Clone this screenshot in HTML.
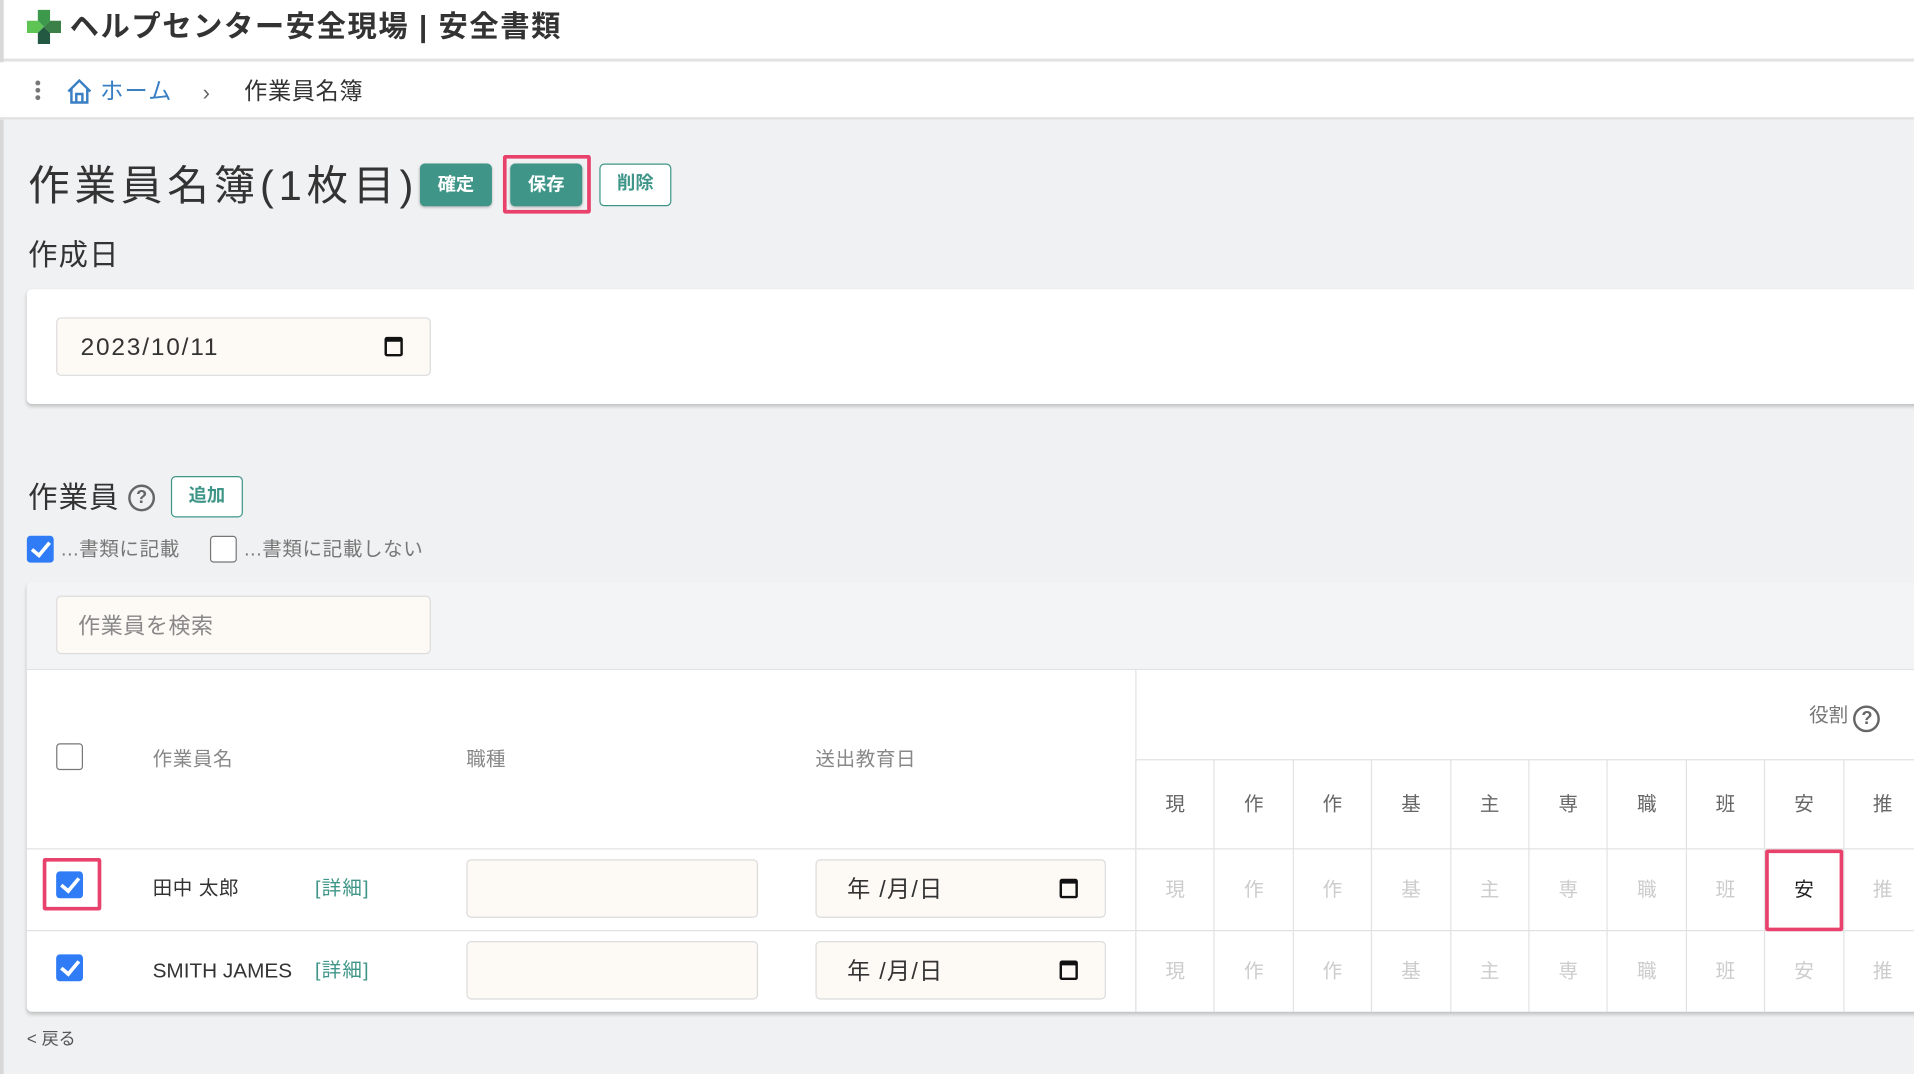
<!DOCTYPE html>
<html><head><meta charset="utf-8">
<style>
*{box-sizing:border-box;margin:0;padding:0}
html,body{width:1914px;height:1074px;overflow:hidden;background:#f0f1f2}
body{font-family:"Liberation Sans","Noto Sans CJK JP",sans-serif;color:#333}
#w{position:absolute;left:0;top:0;width:1568px;height:880px;transform:scale(1.2207,1.2205);transform-origin:0 0;background:#f0f1f2}
.a{position:absolute;white-space:nowrap}
.btn{position:absolute;height:35px;border-radius:4px;font-size:15px;font-weight:bold;line-height:35px;text-align:center;width:59px}
.g{background:#3f9688;color:#fff;box-shadow:0 1px 2px rgba(0,0,0,.25)}
.o{background:#fff;color:#3f9688;border:1.5px solid #3f9688;line-height:32px}
.inp{position:absolute;background:#fdf9f4;border:1px solid #dcdcdc;border-radius:4px}
.cb{position:absolute;width:22px;height:22px;border-radius:3px}
.cb.on{background:#2f7cf6}
.cb.off{border:1.5px solid #777;background:#fff}
.cb.on:after{content:"";position:absolute;left:7px;top:2px;width:6px;height:12px;border:solid #fff;border-width:0 3px 3px 0;transform:rotate(40deg)}
.cell{position:absolute;width:64.4px;text-align:center;font-size:16px;border-left:1px solid #e2e2e2}
.cal{position:absolute;width:15px;height:16px;border:2.5px solid #111;border-top-width:4px;border-radius:2px}
.q{display:inline-block;width:22px;height:22px;border:2px solid #666;border-radius:50%;text-align:center;font-size:15px;line-height:18px;color:#666;font-weight:bold}
</style></head><body><div id="w">
<div class="a" style="left:0;top:0;width:1568px;height:50px;background:#fff;border-bottom:2px solid #e2e2e2"></div>
<div class="a" style="left:0;top:0;width:3px;height:880px;background:#d8d8d8"></div>
<svg class="a" style="left:22px;top:8px" width="28" height="28" viewBox="0 0 28 28">
<polygon points="9,0 19,0 19,9 14,14 9,9" fill="#3d9a4c"/>
<polygon points="0,9 9,9 14,14 9,19 0,19" fill="#5ec454"/>
<polygon points="19,9 28,9 28,19 19,19 14,14" fill="#3b8046"/>
<polygon points="9,19 14,14 19,19 19,28 9,28" fill="#235843"/>
</svg>
<div class="a" style="left:57px;top:7px;font-size:24px;font-weight:bold;color:#333;line-height:32px;letter-spacing:1.3px">ヘルプセンター安全現場 | 安全書類</div>
<div class="a" style="left:0;top:51px;width:1568px;height:47px;background:#fff;border-bottom:2px solid #e2e2e2"></div>
<div class="a" style="left:29px;top:66px;width:4px;height:4px;border-radius:50%;background:#777;box-shadow:0 6px 0 #777,0 12px 0 #777"></div>
<svg class="a" style="left:54px;top:64px" width="22" height="22" viewBox="0 0 22 22" fill="none" stroke="#3a7fc4" stroke-width="2"><path d="M2 11 L11 2 L20 11 M4.5 9 V20 H17.5 V9 M8.5 20 V13 H13.5 V20"/></svg>
<div class="a" style="left:82px;top:63px;font-size:19px;color:#3a7fc4;line-height:26px;letter-spacing:1px">ホーム</div>
<div class="a" style="left:166px;top:63px;font-size:18px;color:#666;line-height:26px">&#x203A;</div>
<div class="a" style="left:200px;top:63px;font-size:19px;color:#333;line-height:26px;letter-spacing:0.5px">作業員名簿</div>
<div class="a" style="left:23px;top:131px;font-size:34px;letter-spacing:4px;color:#333;line-height:44px">作業員名簿(1枚目)</div>
<div class="btn g" style="left:344px;top:134px">確定</div>
<div class="a" style="left:412px;top:127px;width:72px;height:48px;border:3px solid #e8416b;border-radius:2px"></div>
<div class="btn g" style="left:418px;top:134px">保存</div>
<div class="btn o" style="left:491px;top:134px">削除</div>
<div class="a" style="left:23px;top:194px;font-size:24px;line-height:32px;letter-spacing:1px">作成日</div>
<div class="a" style="left:22px;top:237px;width:1560px;height:94px;background:#fff;border-radius:4px;box-shadow:0 2px 3px rgba(0,0,0,.2)"></div>
<div class="inp" style="left:46px;top:260px;width:307px;height:48px"></div>
<div class="a" style="left:66px;top:271px;font-size:20px;color:#333;line-height:28px;letter-spacing:1.5px">2023/10/11</div>
<div class="cal" style="left:315px;top:276px"></div>
<div class="a" style="left:23px;top:393px;font-size:24px;line-height:32px;letter-spacing:1px">作業員</div>
<div class="a" style="left:105px;top:397px"><span class="q">?</span></div>
<div class="btn o" style="left:140px;top:390px;height:34px">追加</div>
<div class="cb on" style="left:22px;top:439px"></div>
<div class="a" style="left:50px;top:440px;font-size:16px;color:#777;line-height:22px;letter-spacing:0.5px">...書類に記載</div>
<div class="cb off" style="left:172px;top:439px"></div>
<div class="a" style="left:200px;top:440px;font-size:16px;color:#777;line-height:22px;letter-spacing:0.5px">...書類に記載しない</div>
<div class="a" style="left:22px;top:477px;width:1560px;height:352px;background:#fff;border-radius:4px;box-shadow:0 2px 3px rgba(0,0,0,.2)"></div>
<div class="a" style="left:22px;top:477px;width:1560px;height:72px;background:#f3f4f5;border-bottom:1px solid #e2e2e2;border-radius:4px 4px 0 0"></div>
<div class="inp" style="left:46px;top:488px;width:307px;height:48px"></div>
<div class="a" style="left:64px;top:500px;font-size:18px;color:#888;line-height:26px;letter-spacing:0.5px">作業員を検索</div>
<div class="a" style="left:930px;top:549px;width:1px;height:280px;background:#e2e2e2"></div>
<div class="a" style="left:930px;top:622px;width:640px;height:1px;background:#e2e2e2"></div>
<div class="a" style="left:22px;top:695px;width:1560px;height:1px;background:#e2e2e2"></div>
<div class="a" style="left:22px;top:762px;width:1560px;height:1px;background:#e2e2e2"></div>
<div class="a" style="left:1482px;top:575px;font-size:16px;color:#777;line-height:24px">役割 <span class="q" style="vertical-align:-2px">?</span></div>
<div class="cb off" style="left:46px;top:609px"></div>
<div class="a" style="left:125px;top:612px;font-size:16px;color:#888;line-height:22px;letter-spacing:0.5px">作業員名</div>
<div class="a" style="left:382px;top:612px;font-size:16px;color:#888;line-height:22px">職種</div>
<div class="a" style="left:668px;top:612px;font-size:16px;color:#888;line-height:22px;letter-spacing:0.5px">送出教育日</div>
<div class="a" style="left:35px;top:703px;width:48px;height:43px;border:3px solid #e8416b;border-radius:2px"></div>
<div class="cb on" style="left:46px;top:714px"></div>
<div class="a" style="left:125px;top:718px;font-size:16px;color:#333;line-height:22px;letter-spacing:0.5px">田中 太郎</div>
<div class="a" style="left:258px;top:718px;font-size:16px;color:#3f9688;line-height:22px;letter-spacing:1px">[詳細]</div>
<div class="inp" style="left:382px;top:704px;width:239px;height:48px"></div>
<div class="inp" style="left:668px;top:704px;width:238px;height:48px"></div>
<div class="a" style="left:694px;top:717px;font-size:19px;color:#333;line-height:26px;letter-spacing:1px">年 /月/日</div>
<div class="cal" style="left:868px;top:720px"></div>
<div class="cb on" style="left:46px;top:782px"></div>
<div class="a" style="left:125px;top:785px;font-size:17px;color:#333;line-height:22px">SMITH JAMES</div>
<div class="a" style="left:258px;top:785px;font-size:16px;color:#3f9688;line-height:22px;letter-spacing:1px">[詳細]</div>
<div class="inp" style="left:382px;top:771px;width:239px;height:48px"></div>
<div class="inp" style="left:668px;top:771px;width:238px;height:48px"></div>
<div class="a" style="left:694px;top:784px;font-size:19px;color:#333;line-height:26px;letter-spacing:1px">年 /月/日</div>
<div class="cal" style="left:868px;top:787px"></div>
<div id="roles"></div>
<div class="a" style="left:1446px;top:696px;width:64px;height:67px;border:3px solid #e8416b;border-radius:2px"></div>
<div class="a" style="left:22px;top:841px;font-size:14px;color:#555;line-height:20px">&lt; 戻る</div>
</div>
<script>
var r="現作作基主専職班安推".split(""),h="";
for(var i=0;i<10;i++){var x=930+i*64.4;
h+='<div class="cell" style="left:'+x+'px;top:622px;height:73px;line-height:75px;color:#666">'+r[i]+'</div>';
h+='<div class="cell" style="left:'+x+'px;top:695px;height:67px;line-height:69px;color:'+(i==8?'#222':'#ccc')+'">'+r[i]+'</div>';
h+='<div class="cell" style="left:'+x+'px;top:762px;height:67px;line-height:69px;color:#ccc">'+r[i]+'</div>';}
document.getElementById('roles').innerHTML=h;
</script>
</body></html>
